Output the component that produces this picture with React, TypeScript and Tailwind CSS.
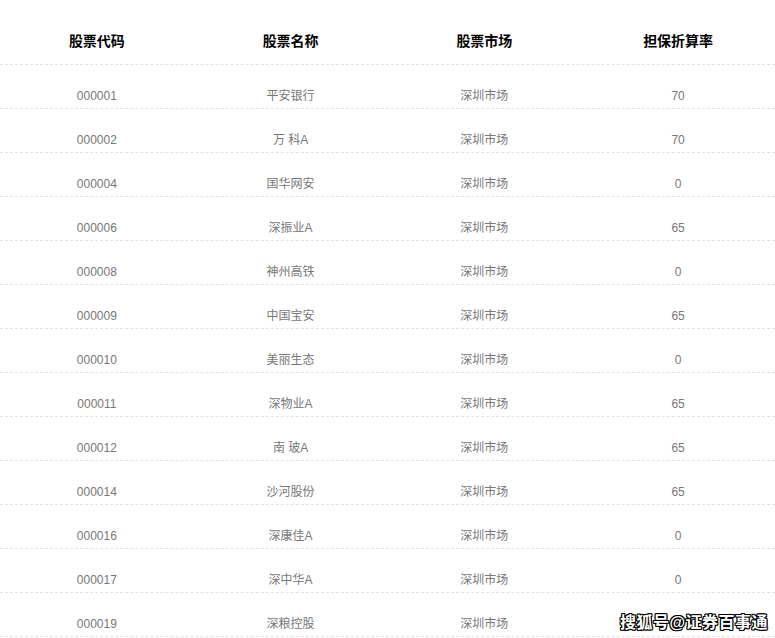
import React from "react"

const rows = [
  { code: "000001", name: "平安银行", market: "深圳市场", rate: "70" },
  { code: "000002", name: "万 科A", market: "深圳市场", rate: "70" },
  { code: "000004", name: "国华网安", market: "深圳市场", rate: "0" },
  { code: "000006", name: "深振业A", market: "深圳市场", rate: "65" },
  { code: "000008", name: "神州高铁", market: "深圳市场", rate: "0" },
  { code: "000009", name: "中国宝安", market: "深圳市场", rate: "65" },
  { code: "000010", name: "美丽生态", market: "深圳市场", rate: "0" },
  { code: "000011", name: "深物业A", market: "深圳市场", rate: "65" },
  { code: "000012", name: "南 玻A", market: "深圳市场", rate: "65" },
  { code: "000014", name: "沙河股份", market: "深圳市场", rate: "65" },
  { code: "000016", name: "深康佳A", market: "深圳市场", rate: "0" },
  { code: "000017", name: "深中华A", market: "深圳市场", rate: "0" },
  { code: "000019", name: "深粮控股", market: "深圳市场", rate: "0" },
]

const headers = ["股票代码", "股票名称", "股票市场", "担保折算率"]

export default function App() {
  return (
    <div className="relative h-[638px] w-[775px] overflow-hidden bg-white font-['Liberation_Sans','Noto_Sans_CJK_SC',sans-serif]">
      {/* 表头 */}
      <div className="grid h-[65px] grid-cols-4 border-b border-dashed border-[#e3e3e3] pt-[31px]">
        {headers.map((h) => (
          <div key={h} className="text-center text-sm font-bold leading-5 text-black">
            {h}
          </div>
        ))}
      </div>

      {/* 数据行 */}
      {rows.map((r) => (
        <div
          key={r.code}
          className="grid h-11 grid-cols-4 border-b border-dashed border-[#e3e3e3] pt-[22px] text-xs leading-[18px] text-[#777]"
        >
          <div className="text-center">{r.code}</div>
          <div className="text-center">{r.name}</div>
          <div className="text-center">{r.market}</div>
          <div className="text-center">{r.rate}</div>
        </div>
      ))}

      {/* 水印 */}
      <div className="absolute left-[620px] top-[611px] bg-white text-base font-bold tracking-[0.5px] text-white [text-shadow:1px_0_0_#000,-1px_0_0_#000,0_1px_0_#000,0_-1px_0_#000,1px_1px_0_#000,-1px_-1px_0_#000,1px_-1px_0_#000,-1px_1px_0_#000]">
        搜狐号@证券百事通
      </div>
    </div>
  )
}
